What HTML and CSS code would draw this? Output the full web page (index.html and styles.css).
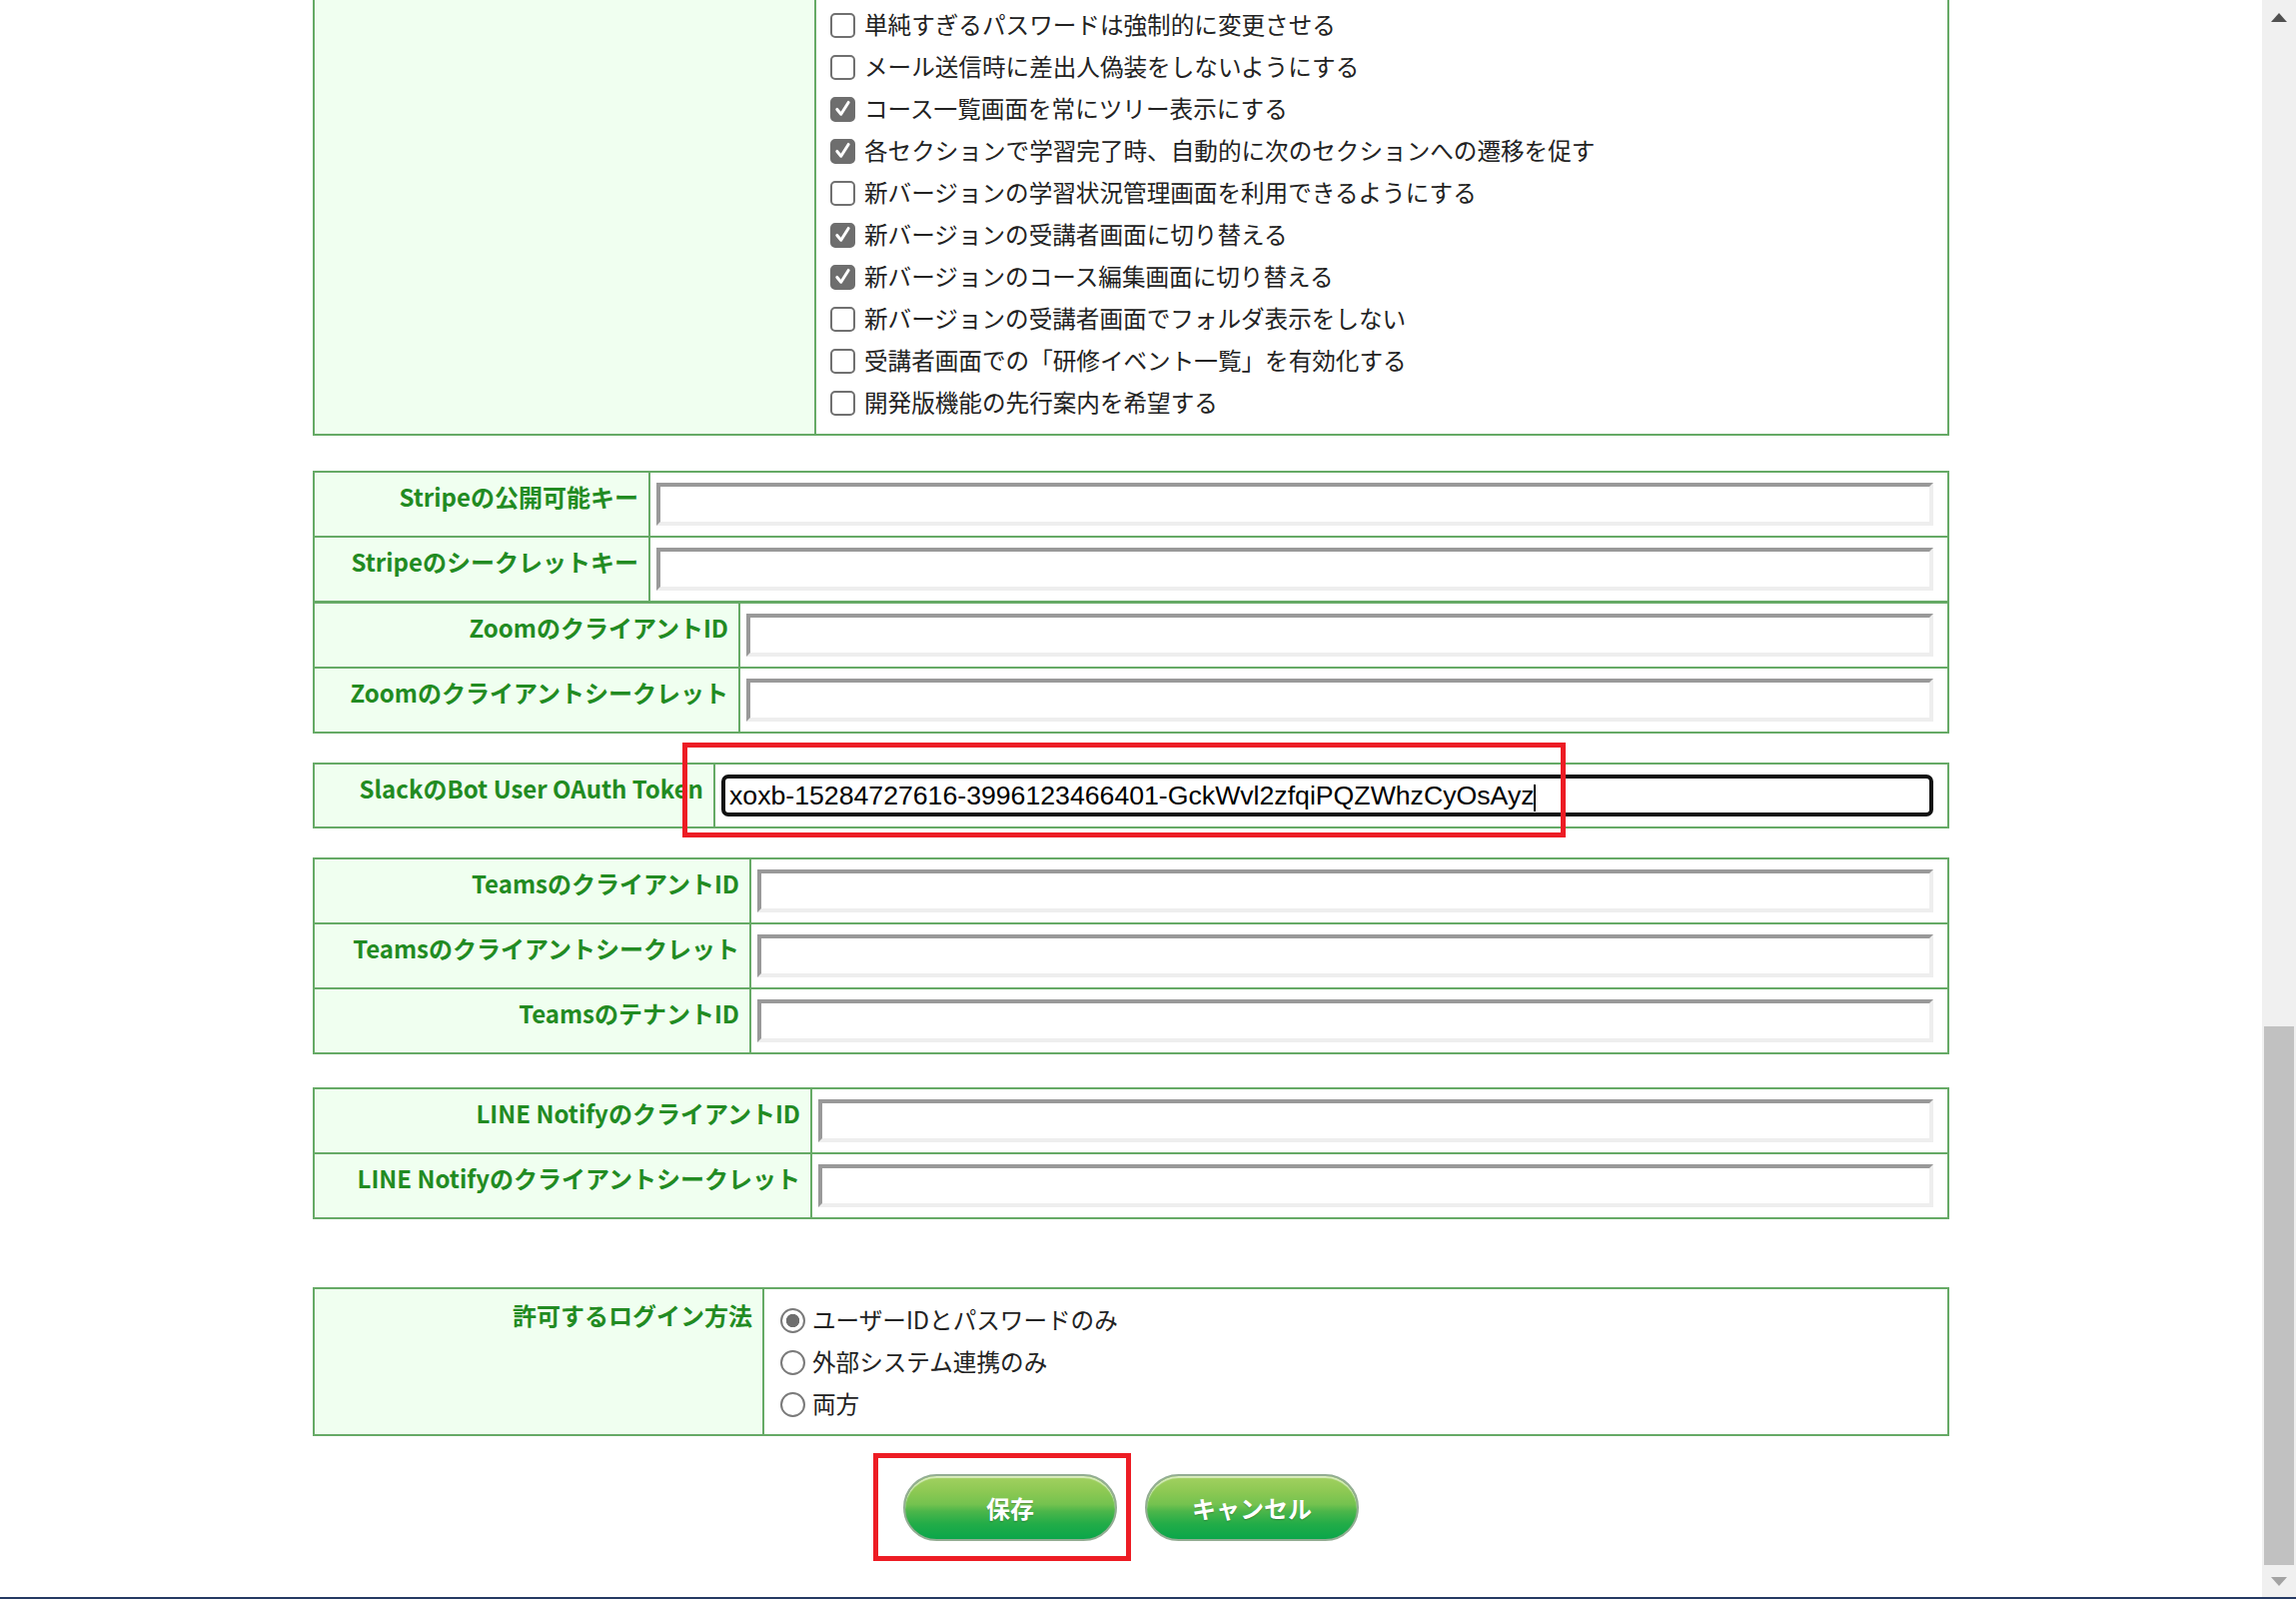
FILE: index.html
```html
<!DOCTYPE html>
<html lang="ja">
<head>
<meta charset="utf-8">
<title>設定</title>
<link rel="stylesheet" href="styles.css">
</head>
<body>
<div class="screen">
  <main class="page">

    <div class="form-table t-top">
      <div class="cell label"></div>
      <div class="cell options">
        <label class="opt"><span class="cb"></span>単純すぎるパスワードは強制的に変更させる</label>
        <label class="opt"><span class="cb"></span>メール送信時に差出人偽装をしないようにする</label>
        <label class="opt"><span class="cb on"><svg viewBox="0 0 24 24"><path d="M5.5 12.5 L10 18 L18.5 4.5"/></svg></span>コース一覧画面を常にツリー表示にする</label>
        <label class="opt"><span class="cb on"><svg viewBox="0 0 24 24"><path d="M5.5 12.5 L10 18 L18.5 4.5"/></svg></span>各セクションで学習完了時、自動的に次のセクションへの遷移を促す</label>
        <label class="opt"><span class="cb"></span>新バージョンの学習状況管理画面を利用できるようにする</label>
        <label class="opt"><span class="cb on"><svg viewBox="0 0 24 24"><path d="M5.5 12.5 L10 18 L18.5 4.5"/></svg></span>新バージョンの受講者画面に切り替える</label>
        <label class="opt"><span class="cb on"><svg viewBox="0 0 24 24"><path d="M5.5 12.5 L10 18 L18.5 4.5"/></svg></span>新バージョンのコース編集画面に切り替える</label>
        <label class="opt"><span class="cb"></span>新バージョンの受講者画面でフォルダ表示をしない</label>
        <label class="opt"><span class="cb"></span>受講者画面での「研修イベント一覧」を有効化する</label>
        <label class="opt"><span class="cb"></span>開発版機能の先行案内を希望する</label>
      </div>
    </div>

    <div class="form-table t-stripe">
      <div class="cell label">Stripeの公開可能キー</div>
      <div class="cell field"><input class="text-input" type="text"></div>
      <div class="cell label">Stripeのシークレットキー</div>
      <div class="cell field"><input class="text-input" type="text"></div>
    </div>

    <div class="form-table t-zoom">
      <div class="cell label">ZoomのクライアントID</div>
      <div class="cell field"><input class="text-input" type="text"></div>
      <div class="cell label">Zoomのクライアントシークレット</div>
      <div class="cell field"><input class="text-input" type="text"></div>
    </div>

    <div class="form-table t-slack">
      <div class="cell label">SlackのBot User OAuth Token</div>
      <div class="cell field slack-field">
        <input class="text-input focused" type="text" value="xoxb-15284727616-3996123466401-GckWvl2zfqiPQZWhzCyOsAyz">
        <span class="caret"></span>
      </div>
      <div class="annot annot-slack"></div>
    </div>

    <div class="form-table t-teams">
      <div class="cell label">TeamsのクライアントID</div>
      <div class="cell field"><input class="text-input" type="text"></div>
      <div class="cell label">Teamsのクライアントシークレット</div>
      <div class="cell field"><input class="text-input" type="text"></div>
      <div class="cell label">TeamsのテナントID</div>
      <div class="cell field"><input class="text-input" type="text"></div>
    </div>

    <div class="form-table t-line">
      <div class="cell label">LINE NotifyのクライアントID</div>
      <div class="cell field"><input class="text-input" type="text"></div>
      <div class="cell label">LINE Notifyのクライアントシークレット</div>
      <div class="cell field"><input class="text-input" type="text"></div>
    </div>

    <div class="form-table t-login">
      <div class="cell label">許可するログイン方法</div>
      <div class="cell radios">
        <label class="opt"><span class="rb on"></span>ユーザーIDとパスワードのみ</label>
        <label class="opt"><span class="rb"></span>外部システム連携のみ</label>
        <label class="opt"><span class="rb"></span>両方</label>
      </div>
    </div>

    <div class="actions">
      <div class="btn-wrap">
        <button class="btn" type="button">保存</button>
        <div class="annot annot-save"></div>
      </div>
      <div class="btn-wrap">
        <button class="btn" type="button">キャンセル</button>
      </div>
    </div>

  </main>

  <aside class="scrollbar">
    <div class="sb-btn"><span class="arrow-up"></span></div>
    <div class="sb-track"><div class="sb-thumb"></div></div>
    <div class="sb-btn sb-btn-down"><span class="arrow-down"></span></div>
  </aside>

  <div class="taskbar-edge"></div>
</div>
</body>
</html>
```

FILE: styles.css
```css
* {
  box-sizing: border-box;
}

html,
body {
  margin: 0;
  padding: 0;
  background: #ffffff;
  overflow: hidden;
}

body {
  font-family: "Noto Sans CJK JP", "Noto Sans", sans-serif;
  color: #222222;
}

.screen {
  width: 2298px;
  height: 1600px;
  display: grid;
  grid-template-columns: 1fr 34px;
  grid-template-rows: 1fr 2px;
}

.page {
  grid-column: 1;
  grid-row: 1;
  overflow: hidden;
  display: flex;
  flex-direction: column;
  align-items: center;
}

/* ---------- form tables ---------- */

.form-table {
  position: relative;
  flex-shrink: 0;
  width: 1638px;
  display: grid;
  border-top: 2px solid #66aa66;
  border-left: 2px solid #66aa66;
}

.cell {
  border-right: 2px solid #66aa66;
  border-bottom: 2px solid #66aa66;
}

.label {
  background: #f0fff0;
  color: #228b22;
  font-weight: 700;
  font-size: 24px;
  line-height: 1.45;
  text-align: right;
  white-space: nowrap;
  padding: 7px 10px 0 0;
}

.field {
  padding: 10px 14px 10px 6px;
}

.t-top {
  grid-template-columns: 502px 1fr;
  margin-top: -12px;
}

.t-stripe {
  grid-template-columns: 336px 1fr;
  margin-top: 35px;
}

.t-zoom {
  grid-template-columns: 426px 1fr;
  margin-top: -1px;
}

.t-slack {
  grid-template-columns: 401px 1fr;
  margin-top: 29px;
}

.t-teams {
  grid-template-columns: 437px 1fr;
  margin-top: 29px;
}

.t-line {
  grid-template-columns: 498px 1fr;
  margin-top: 33px;
}

.t-login {
  grid-template-columns: 450px 1fr;
  margin-top: 68px;
}

.t-login .label {
  padding-top: 9px;
}

/* ---------- inputs ---------- */

.text-input {
  display: block;
  width: 100%;
  height: 43px;
  margin: 0;
  padding: 0 4px;
  border: 4px solid;
  border-color: #999999 #eeeeee #eeeeee #999999;
  background: #ffffff;
  font-family: "Liberation Sans", Arial, sans-serif;
  font-size: 26.67px;
  color: #000000;
  outline: none;
}

.text-input.focused {
  height: 42px;
  border: 4px solid #111111;
  border-radius: 7px;
}

.slack-field {
  position: relative;
}

.caret {
  position: absolute;
  left: 819px;
  top: 20px;
  width: 2px;
  height: 27px;
  background: #000000;
}

/* ---------- checkbox / radio lists ---------- */

.options {
  padding: 14px 0 10px 14px;
}

.radios {
  padding: 10px 0 9px 16px;
}

.opt {
  display: flex;
  align-items: center;
  height: 42px;
  font-size: 23.6px;
  line-height: 1;
  color: #222222;
  white-space: nowrap;
}

.cb {
  flex: none;
  width: 25px;
  height: 25px;
  margin-right: 9px;
  border: 2px solid #707070;
  border-radius: 5px;
  background: #ffffff;
  display: flex;
  align-items: center;
  justify-content: center;
}

.cb.on {
  background: #6e6e6e;
  border-color: #6e6e6e;
}

.cb svg {
  width: 22px;
  height: 22px;
  fill: none;
  stroke: #ffffff;
  stroke-width: 3.4;
  stroke-linecap: round;
  stroke-linejoin: round;
}

.rb {
  flex: none;
  width: 25px;
  height: 25px;
  margin-right: 7px;
  border: 2px solid #7a7a7a;
  border-radius: 50%;
  background: #ffffff;
}

.rb.on {
  background: radial-gradient(circle, #6e6e6e 0 6.3px, #ffffff 7px);
}

/* ---------- buttons ---------- */

.actions {
  flex-shrink: 0;
  display: flex;
  justify-content: center;
  gap: 28px;
  margin-top: 38px;
}

.btn-wrap {
  position: relative;
}

.btn {
  display: block;
  width: 214px;
  height: 67px;
  border: 2px solid #93ad93;
  border-radius: 34px;
  background: linear-gradient(to bottom, #a3d160 0%, #8cc853 25%, #74c24f 45%, #4cb64a 56%, #22ac48 76%, #0aa64a 100%);
  box-shadow: inset 0 2px 1px rgba(255, 255, 255, 0.6);
  color: #ffffff;
  font-family: "Noto Sans CJK JP", "Noto Sans", sans-serif;
  font-weight: 700;
  font-size: 24px;
  text-shadow: 0 1px 1px rgba(0, 0, 0, 0.25);
  cursor: pointer;
}

/* ---------- red annotation boxes ---------- */

.annot {
  position: absolute;
  border: 5px solid #ed1c24;
  pointer-events: none;
}

.annot-slack {
  left: 368px;
  top: -22px;
  width: 884px;
  height: 95px;
}

.annot-save {
  left: -30px;
  top: -21px;
  width: 258px;
  height: 108px;
}

/* ---------- scrollbar ---------- */

.scrollbar {
  grid-column: 2;
  grid-row: 1;
  background: #f0f0f0;
  display: flex;
  flex-direction: column;
}

.sb-btn {
  flex: none;
  height: 34px;
  display: flex;
  align-items: center;
  justify-content: center;
}

.sb-btn-down {
  height: 32px;
}

.arrow-up {
  width: 0;
  height: 0;
  border-left: 8px solid transparent;
  border-right: 8px solid transparent;
  border-bottom: 9px solid #505050;
}

.arrow-down {
  width: 0;
  height: 0;
  border-left: 8px solid transparent;
  border-right: 8px solid transparent;
  border-top: 9px solid #a3a3a3;
}

.sb-track {
  flex: 1;
  display: flex;
  flex-direction: column;
  justify-content: flex-end;
  padding: 0 2px;
}

.sb-thumb {
  height: 539px;
  background: #c1c1c1;
}

.taskbar-edge {
  grid-column: 1 / 3;
  grid-row: 2;
  background: #253a63;
}
```
